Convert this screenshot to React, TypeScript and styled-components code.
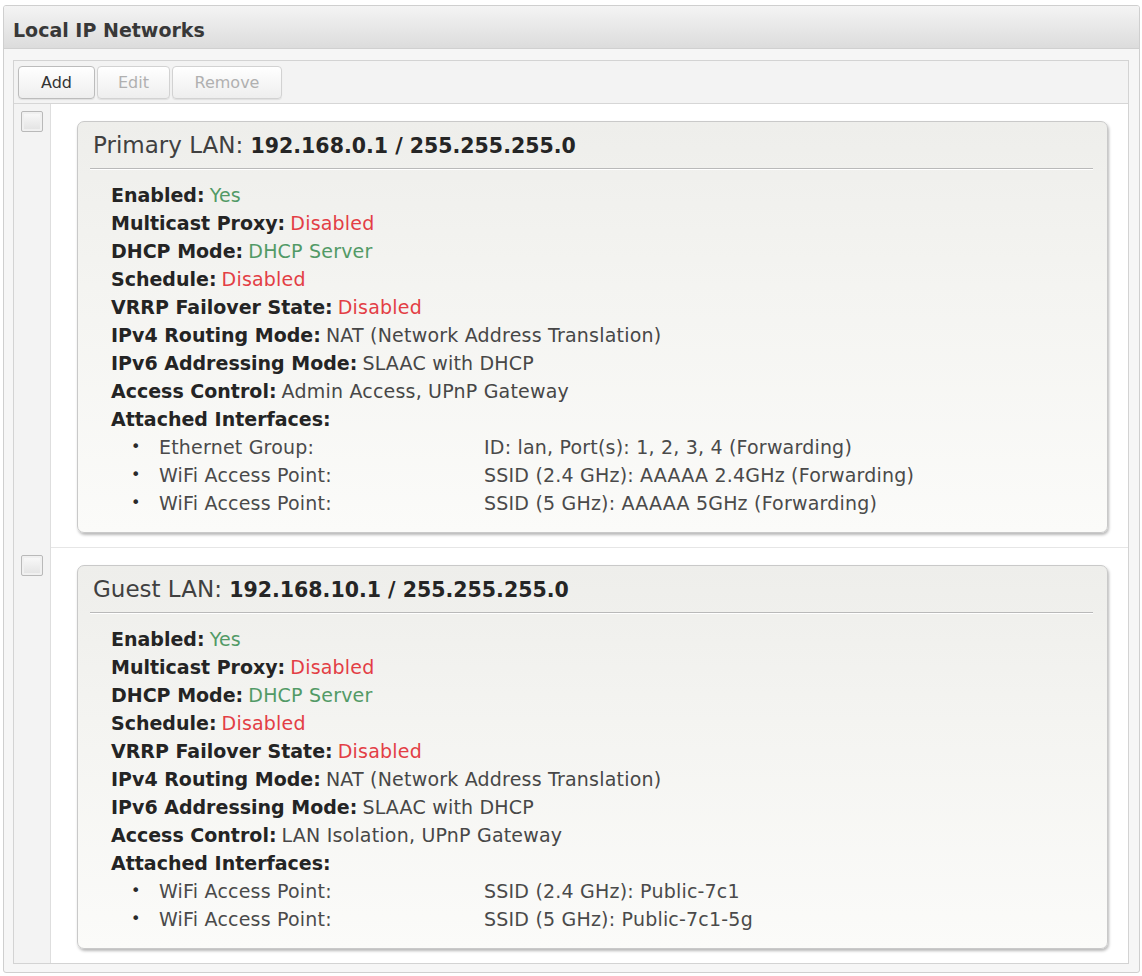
import React from "react";
import styled, { createGlobalStyle } from "styled-components";

const GlobalStyle = createGlobalStyle`
  html, body { margin: 0; padding: 0; background: #ffffff; }
  body { font-family: "DejaVu Sans", Verdana, sans-serif; color: #333; }
  * { box-sizing: border-box; }
`;

const Panel = styled.section`
  margin: 5px 3px 0 3px;
  width: 1137px;
  border: 1px solid #cfcfcf;
  border-radius: 3px;
  background: #f6f6f6;
  overflow: hidden;
`;

const PanelHeader = styled.header`
  height: 43px;
  padding: 6px 0 0 9px;
  line-height: 36px;
  font-size: 19px;
  font-weight: bold;
  color: #383838;
  background: linear-gradient(#f4f4f4, #dcdcdc);
  border-bottom: 1px solid #d0d0d0;
`;

const PanelBody = styled.div`
  padding: 11px 10px 8px 9px;
`;

const Inner = styled.div`
  border: 1px solid #d3d3d3;
  background: #ffffff;
`;

const Toolbar = styled.div`
  display: flex;
  gap: 2px;
  height: 43px;
  padding: 5px 0 0 4px;
  background: #f3f3f3;
  border-bottom: 1px solid #d6d6d6;
`;

const ToolButton = styled.button<{ $w: number; $disabled?: boolean }>`
  width: ${(p) => p.$w}px;
  height: 33px;
  padding: 0;
  font-family: "DejaVu Sans", Verdana, sans-serif;
  font-size: 16px;
  color: ${(p) => (p.$disabled ? "#b0b0b0" : "#333333")};
  background: linear-gradient(#ffffff, #eeeeee);
  border: 1px solid ${(p) => (p.$disabled ? "#d2d2d2" : "#bcbcbc")};
  border-radius: 4px;
  box-shadow: 0 1px 1px rgba(0, 0, 0, 0.08);
`;

const Row = styled.div`
  display: grid;
  grid-template-columns: 37px 1fr;
`;

const CheckCell = styled.div`
  background: #f3f3f3;
  border-right: 1px solid #dedede;
  padding: 7px 0 0 7px;
`;

const CheckBox = styled.span`
  display: block;
  width: 22px;
  height: 21px;
  border: 1px solid #b9b9b9;
  border-radius: 2px;
  background: linear-gradient(#fafafa, #e2e2e2);
  box-shadow: inset 0 0 0 2px #f0f0f0;
`;

const ContentCell = styled.div<{ $last?: boolean }>`
  padding: 17px 20px 14px 26px;
  border-bottom: ${(p) => (p.$last ? "none" : "1px solid #e6e6e6")};
`;

const Card = styled.article`
  border: 1px solid #c9c9c9;
  border-radius: 7px;
  background: linear-gradient(#eeeeeb 0%, #f4f4f1 40%, #fbfbf9 100%);
  box-shadow: 1px 2px 3px rgba(0, 0, 0, 0.28);
  padding: 9px 14px 15px 12px;
`;

const CardTitle = styled.h2`
  margin: 0;
  padding-left: 3px;
  height: 28px;
  line-height: 28px;
  font-size: 23px;
  font-weight: normal;
  color: #404040;
  white-space: nowrap;
`;

const TitleAddress = styled.span`
  font-size: 20.5px;
  font-weight: bold;
  color: #252525;
`;

const Divider = styled.hr`
  margin: 9px 0 0 0;
  height: 2px;
  border: none;
  border-top: 1px solid #b9b9b9;
  border-bottom: 1px solid #ffffff;
`;

const Fields = styled.div`
  padding: 11px 0 0 21px;
`;

const Field = styled.div`
  height: 28px;
  line-height: 28px;
  white-space: nowrap;
`;

const Label = styled.span`
  font-size: 19px;
  font-weight: bold;
  color: #242424;
`;

type Tone = "plain" | "on" | "off";

const Value = styled.span<{ $tone: Tone }>`
  font-size: 19px;
  letter-spacing: 0.2px;
  color: ${(p) => (p.$tone === "on" ? "#529a66" : p.$tone === "off" ? "#e33e45" : "#474747")};
`;

const IfaceList = styled.ul`
  list-style: none;
  margin: 0;
  padding: 0 0 0 20px;
`;

const Iface = styled.li`
  display: grid;
  grid-template-columns: 28px 325px 1fr;
  height: 28px;
  line-height: 28px;
  font-size: 19px;
  letter-spacing: 0.2px;
  color: #4a4a4a;
  white-space: nowrap;
`;

const Bullet = styled.span`
  font-size: 16px;
  color: #2a2a2a;
`;

type FieldData = { label: string; value?: string; tone?: Tone };
type IfaceData = { kind: string; detail: string };
type Network = { name: string; address: string; fields: FieldData[]; ifaces: IfaceData[] };

const common = (access: string): FieldData[] => [
  { label: "Enabled:", value: "Yes", tone: "on" },
  { label: "Multicast Proxy:", value: "Disabled", tone: "off" },
  { label: "DHCP Mode:", value: "DHCP Server", tone: "on" },
  { label: "Schedule:", value: "Disabled", tone: "off" },
  { label: "VRRP Failover State:", value: "Disabled", tone: "off" },
  { label: "IPv4 Routing Mode:", value: "NAT (Network Address Translation)", tone: "plain" },
  { label: "IPv6 Addressing Mode:", value: "SLAAC with DHCP", tone: "plain" },
  { label: "Access Control:", value: access, tone: "plain" },
  { label: "Attached Interfaces:" },
];

const networks: Network[] = [
  {
    name: "Primary LAN:",
    address: "192.168.0.1 / 255.255.255.0",
    fields: common("Admin Access, UPnP Gateway"),
    ifaces: [
      { kind: "Ethernet Group:", detail: "ID: lan, Port(s): 1, 2, 3, 4 (Forwarding)" },
      { kind: "WiFi Access Point:", detail: "SSID (2.4 GHz): AAAAA 2.4GHz (Forwarding)" },
      { kind: "WiFi Access Point:", detail: "SSID (5 GHz): AAAAA 5GHz (Forwarding)" },
    ],
  },
  {
    name: "Guest LAN:",
    address: "192.168.10.1 / 255.255.255.0",
    fields: common("LAN Isolation, UPnP Gateway"),
    ifaces: [
      { kind: "WiFi Access Point:", detail: "SSID (2.4 GHz): Public-7c1" },
      { kind: "WiFi Access Point:", detail: "SSID (5 GHz): Public-7c1-5g" },
    ],
  },
];

export default function App() {
  return (
    <>
      <GlobalStyle />
      <Panel>
        <PanelHeader>Local IP Networks</PanelHeader>
        <PanelBody>
          <Inner>
            <Toolbar>
              <ToolButton $w={77}>Add</ToolButton>
              <ToolButton $w={73} $disabled>Edit</ToolButton>
              <ToolButton $w={110} $disabled>Remove</ToolButton>
            </Toolbar>
            {networks.map((n, i) => (
              <Row key={n.name}>
                <CheckCell>
                  <CheckBox />
                </CheckCell>
                <ContentCell $last={i === networks.length - 1}>
                  <Card>
                    <CardTitle>
                      {n.name} <TitleAddress>{n.address}</TitleAddress>
                    </CardTitle>
                    <Divider />
                    <Fields>
                      {n.fields.map((f) => (
                        <Field key={f.label}>
                          <Label>{f.label}</Label>
                          {f.value && (
                            <>
                              {" "}
                              <Value $tone={f.tone ?? "plain"}>{f.value}</Value>
                            </>
                          )}
                        </Field>
                      ))}
                      <IfaceList>
                        {n.ifaces.map((it, k) => (
                          <Iface key={k}>
                            <Bullet>•</Bullet>
                            <span>{it.kind}</span>
                            <span>{it.detail}</span>
                          </Iface>
                        ))}
                      </IfaceList>
                    </Fields>
                  </Card>
                </ContentCell>
              </Row>
            ))}
          </Inner>
        </PanelBody>
      </Panel>
    </>
  );
}
